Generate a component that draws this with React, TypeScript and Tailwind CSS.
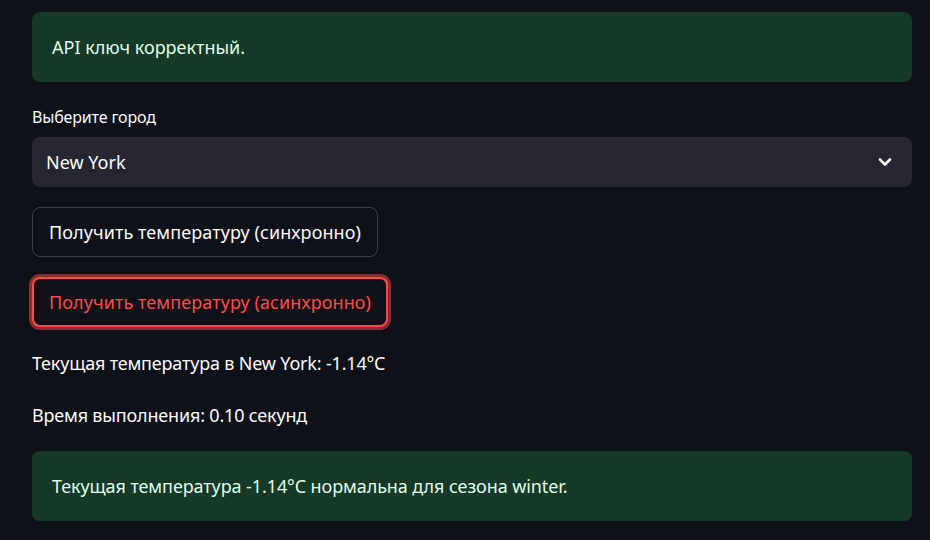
export default function App() {
  const font = { fontFamily: '"Noto Sans", "Open Sans", sans-serif' };
  return (
    <div
      className="min-h-screen w-full bg-[#0e1117] pl-8 pr-[18px] pt-3 text-[#fafafa]"
      style={font}
    >
      <div className="flex h-[70px] items-center rounded-lg bg-[#173928] px-5 text-[18px] text-[#dffde9]">
        API ключ корректный.
      </div>

      <div className="mt-[25px] text-[16px] leading-5 tracking-[-0.01em]">
        Выберите город
      </div>

      <div className="mt-[10px] flex h-[50px] items-center justify-between rounded-lg bg-[#262730] pl-[14px] pr-5">
        <span className="text-[18px]">New York</span>
        <svg width="14" height="10" viewBox="0 0 14 10" fill="none">
          <path
            d="M2 2.5L7 7.5L12 2.5"
            stroke="#fafafa"
            strokeWidth="2.6"
            strokeLinecap="round"
            strokeLinejoin="round"
          />
        </svg>
      </div>

      <div className="mt-5 flex">
        <button className="h-[50px] rounded-lg border border-[#3d4046] bg-[#0e1117] px-4 text-[18px] tracking-[0.005em] text-[#fafafa]">
          Получить температуру (синхронно)
        </button>
      </div>

      <div className="mt-5 flex">
        <button className="h-[50px] rounded-lg border-2 border-[#ff4b4b] bg-[#0e1117] px-[15px] text-[18px] tracking-[0.005em] text-[#ff4b4b] shadow-[0_0_0_3px_rgba(255,75,75,0.5)]">
          Получить температуру (асинхронно)
        </button>
      </div>

      <p className="mt-[23px] text-[18px] leading-[26px] tracking-[-0.01em]">
        Текущая температура в New York: -1.14°C
      </p>

      <p className="mt-[26px] text-[18px] leading-[26px] tracking-[-0.01em]">
        Время выполнения: 0.10 секунд
      </p>

      <div className="mt-[23px] flex h-[70px] items-center rounded-lg bg-[#173928] px-5 text-[18px] tracking-[-0.005em] text-[#dffde9]">
        Текущая температура -1.14°C нормальна для сезона winter.
      </div>
    </div>
  );
}
